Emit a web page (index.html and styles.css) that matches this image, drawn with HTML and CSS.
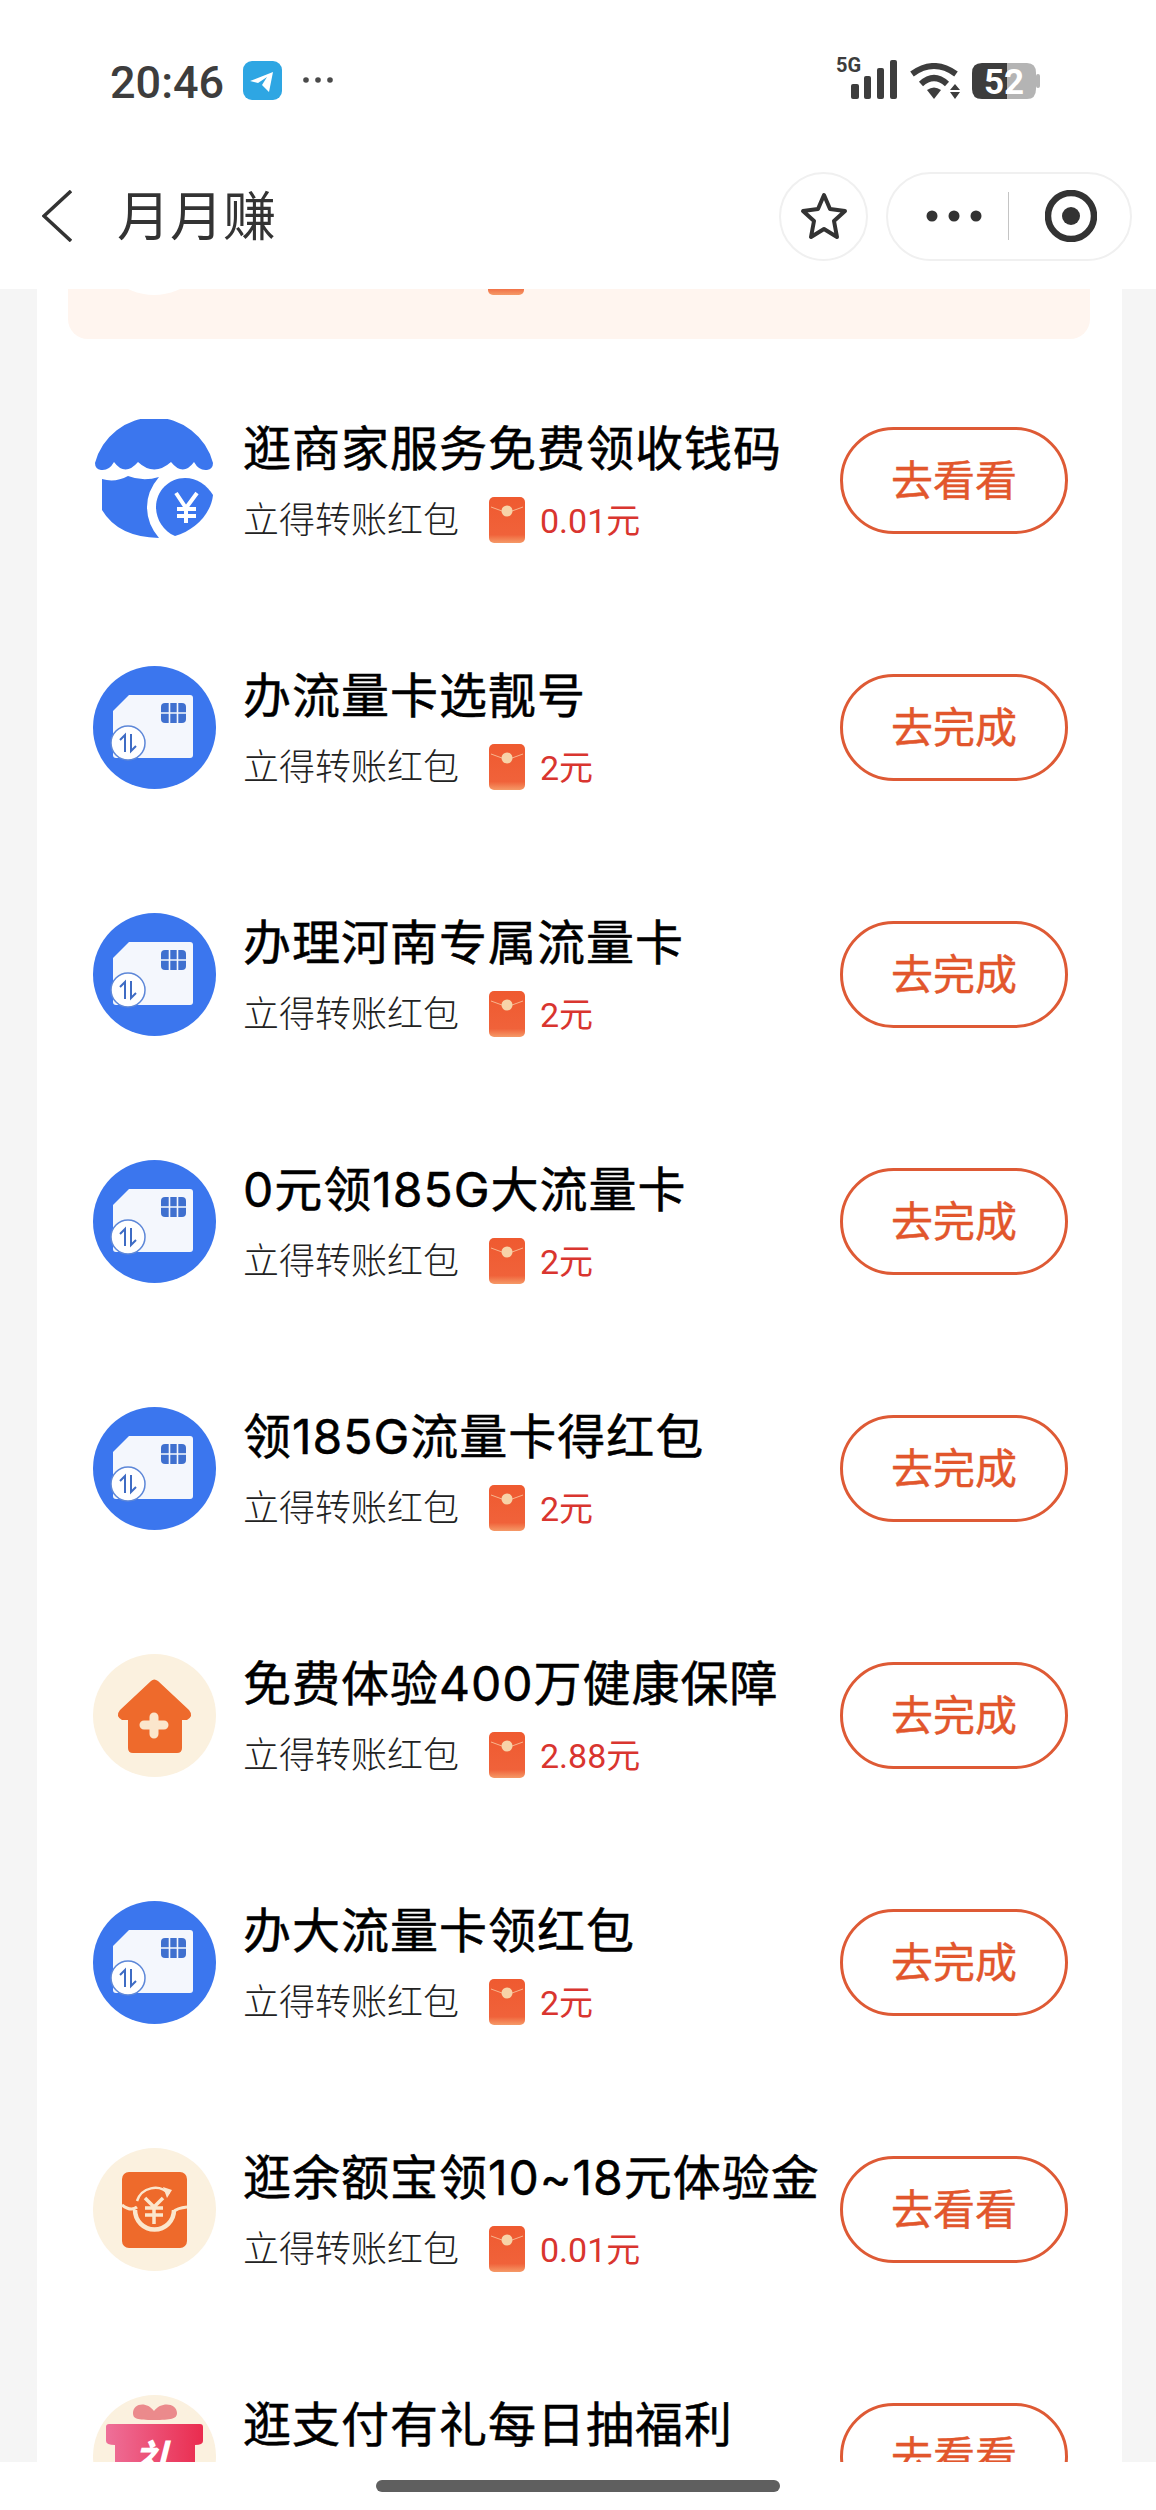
FILE: index.html
```html
<!DOCTYPE html>
<html lang="zh-CN">
<head>
  <meta charset="UTF-8" />
  <title>月月赚</title>
  <link rel="stylesheet" href="styles.css">
</head>
<body>
  <svg class="defs" width="0" height="0">
    <defs>
      <linearGradient id="envFill" x1="0" y1="0" x2="0" y2="1">
        <stop offset="0" stop-color="#ef5a30"/>
        <stop offset="0.82" stop-color="#f0623a"/>
        <stop offset="1" stop-color="#f59a68"/>
      </linearGradient>
      <linearGradient id="giftFill" x1="0" y1="0" x2="1" y2="0">
        <stop offset="0" stop-color="#ee7099"/>
        <stop offset="1" stop-color="#ea2c4e"/>
      </linearGradient>
      <symbol id="envelope" viewBox="0 0 36 46">
        <rect width="36" height="46" rx="5" fill="url(#envFill)"/>
        <path d="M2 10 L13 14 M23 14 L34 10" stroke="#f8b58e" stroke-width="1"/>
        <circle cx="18" cy="14" r="5.5" fill="#f7d3a8"/>
      </symbol>
      <symbol id="simcard" viewBox="0 0 123 123">
        <circle cx="61.5" cy="61.5" r="61.5" fill="#3b76ee"/>
        <path d="M36 29 H97 Q100 29 100 32 V89 Q100 92 97 92 H23 Q20 92 20 89 V45 Z" fill="#f4f7fd"/>
        <rect x="68" y="37" width="25" height="20" rx="4" fill="#3f70cf"/>
        <path d="M68 47 H93 M76.500 37 V57 M84.500 37 V57" stroke="#f4f7fd" stroke-width="1.600"/>
        <circle cx="35" cy="77" r="17" fill="#fff" stroke="#5d87d8" stroke-width="1.500"/>
        <path d="M27 74 L32 69 V86 M43 80 L38 85 V68" fill="none" stroke="#3f6cc4" stroke-width="2"/>
      </symbol>
      <symbol id="shop" viewBox="0 0 123 123">
        <path d="M2 44 A61 61 0 0 1 120 44 Q120 50 114 51 Q106 52 101 43 Q90 58 78 43 Q61 58 45 43 Q32 58 21 43 Q16 52 8 51 Q2 50 2 44 Z" fill="#3b76ee"/>
        <path d="M9 60 Q22 64 35 57 Q50 63 66 58 Q54 72 54 88 Q54 105 66 119 Q25 118 9 91 Z" fill="#3b76ee"/>
        <path d="M92 59 C104 59 114 66 120 76 C118 96 100 112 82 117 C70 112 63 100 63 88 C63 72 76 59 92 59 Z" fill="#3b76ee"/>
        <path d="M83 74 L93 89 L104 74 M93 89 V104 M84 90 H103 M84 97 H103" fill="none" stroke="#fff" stroke-width="4"/>
      </symbol>
      <symbol id="house" viewBox="0 0 123 123">
        <circle cx="61.500" cy="61.500" r="61.500" fill="#fbf1df"/>
        <path d="M58 27 Q61 24 65 27 L96 56 Q101 62 94 66 L89 66 V94 Q89 99 84 99 H40 Q35 99 35 94 V66 L29 66 Q22 62 27 56 Z" fill="#ee6a2c"/>
        <path d="M51 71 H71 M61 63 V80" stroke="#fbe6cc" stroke-width="9" stroke-linecap="round"/>
      </symbol>
      <symbol id="yuebao" viewBox="0 0 123 123">
        <circle cx="61.500" cy="61.500" r="61.500" fill="#fbf1df"/>
        <rect x="29" y="24" width="65" height="76" rx="7" fill="#ee6a2b"/>
        <path d="M29 57 Q38 64 44 59 M94 59 Q84 60 80 64" fill="none" stroke="#fbe6cc" stroke-width="3"/>
        <path d="M42 62 A19.500 19.500 0 0 0 81 62" fill="none" stroke="#fbe6cc" stroke-width="4.500"/>
        <path d="M44 53 A19 19 0 0 1 76 46" fill="none" stroke="#fbe6cc" stroke-width="2.500"/>
        <path d="M70 39 L79 42 L74 50 Z" fill="#fbe6cc"/>
        <path d="M52 50 L61 59 L70 50 M61 59 V76 M52 60 H70 M52 67 H70" fill="none" stroke="#fbe6cc" stroke-width="3.500"/>
      </symbol>
      <symbol id="gift" viewBox="0 0 123 123">
        <circle cx="61.500" cy="61.500" r="61.500" fill="#fbf1df"/>
        <path d="M61 16 C54 6 40 8 40 18 C40 24 44 25 61 25 C78 25 84 24 84 18 C84 8 68 6 61 16 Z" fill="#eb8a8c"/>
        <path d="M16 29 H107 Q110 29 110 32 V46 Q110 50 102 50 V123 H22 V50 Q13 50 13 46 V32 Q13 29 16 29 Z" fill="url(#giftFill)"/>
        <text class="gift-text" x="61" y="84">礼</text>
      </symbol>
    </defs>
  </svg>

  <div class="statusbar">
    <div class="status-left">
      <span class="clock">20:46</span>
      <svg class="tg" width="39" height="39" viewBox="0 0 39 39">
        <rect width="39" height="39" rx="9" fill="#2ea6e3"/>
        <path d="M7 20 L30 11 L26 31 L19 24 L24 16 L15 22 Z" fill="#fff"/>
      </svg>
      <svg class="more" width="32" height="8" viewBox="0 0 32 8">
        <circle cx="4" cy="4" r="2.800" fill="#4a4a4a"/>
        <circle cx="16" cy="4" r="2.800" fill="#4a4a4a"/>
        <circle cx="28" cy="4" r="2.800" fill="#4a4a4a"/>
      </svg>
    </div>
    <div class="status-right">
      <svg width="62" height="50" viewBox="0 -8 62 50">
        <text class="sig-text" x="0" y="15">5G</text>
        <rect x="15" y="27" width="8" height="15" rx="2" fill="#3d3d3d"/>
        <rect x="28" y="19" width="7" height="23" rx="2" fill="#3d3d3d"/>
        <rect x="41" y="11" width="7" height="31" rx="2" fill="#3d3d3d"/>
        <rect x="54" y="3" width="7" height="39" rx="2" fill="#3d3d3d"/>
      </svg>
      <svg width="50" height="36" viewBox="0 0 50 36">
        <path d="M2 11 Q24 -5 46 11" fill="none" stroke="#3d3d3d" stroke-width="6"/>
        <path d="M11 21 Q24 9 37 21" fill="none" stroke="#3d3d3d" stroke-width="6"/>
        <path d="M17 27 Q24 22 31 27 L24 36 Z" fill="#3d3d3d"/>
        <path d="M45 21 L50 27 H40 Z M40 29 H50 L45 36 Z" fill="#3d3d3d"/>
      </svg>
      <svg class="battery" width="68" height="46" viewBox="0 0 68 46">
        <path d="M35 0 H55 Q64 0 64 10 V26 Q64 36 55 36 H35 Z" fill="#b4b4b4"/>
        <rect x="64" y="11" width="4" height="14" rx="2" fill="#b4b4b4"/>
        <path d="M35 0 H10 Q0 0 0 10 V26 Q0 36 10 36 H35 Z" fill="#3d3d3d"/>
        <text class="bat-text" x="32" y="31">52</text>
      </svg>
    </div>
  </div>

  <div class="navbar">
    <svg class="back" width="30" height="52" viewBox="0 0 30 52">
      <path d="M29 1 L2 26 L29 51" fill="none" stroke="#333" stroke-width="3.500"/>
    </svg>
    <div class="nav-title">月月赚</div>
    <div class="nav-star">
      <svg width="50" height="50" viewBox="0 0 50 50">
        <path d="M25 4 L31 18 L46 20 L35 30 L38 46 L25 38 L12 46 L15 30 L4 20 L19 18 Z" fill="none" stroke="#333" stroke-width="4" stroke-linejoin="round"/>
      </svg>
    </div>
    <div class="capsule">
      <svg width="56" height="12" viewBox="0 0 56 12">
        <circle cx="6" cy="6" r="5.500" fill="#333"/>
        <circle cx="28" cy="6" r="5.500" fill="#333"/>
        <circle cx="50" cy="6" r="5.500" fill="#333"/>
      </svg>
      <span class="capsule-line"></span>
      <svg width="52" height="52" viewBox="0 0 52 52">
        <circle cx="26" cy="26" r="23" fill="none" stroke="#333" stroke-width="6.500"/>
        <circle cx="26" cy="26" r="9" fill="#333"/>
      </svg>
    </div>
  </div>

  <div class="scroller">
    <div class="card">
      <div class="banner">
        <span class="banner-dot"></span>
        <svg class="envelope banner-env"><use href="#envelope"/></svg>
      </div>

      <div class="task">
        <svg class="task-icon"><use href="#shop"/></svg>
        <div class="task-text">
          <div class="task-title">逛商家服务免费领收钱码</div>
          <div class="task-sub"><span class="sub-label">立得转账红包</span><svg class="envelope"><use href="#envelope"/></svg><span class="amount">0.01元</span></div>
        </div>
        <div class="task-btn">去看看</div>
      </div>

      <div class="task">
        <svg class="task-icon"><use href="#simcard"/></svg>
        <div class="task-text">
          <div class="task-title">办流量卡选靓号</div>
          <div class="task-sub"><span class="sub-label">立得转账红包</span><svg class="envelope"><use href="#envelope"/></svg><span class="amount">2元</span></div>
        </div>
        <div class="task-btn">去完成</div>
      </div>

      <div class="task">
        <svg class="task-icon"><use href="#simcard"/></svg>
        <div class="task-text">
          <div class="task-title">办理河南专属流量卡</div>
          <div class="task-sub"><span class="sub-label">立得转账红包</span><svg class="envelope"><use href="#envelope"/></svg><span class="amount">2元</span></div>
        </div>
        <div class="task-btn">去完成</div>
      </div>

      <div class="task">
        <svg class="task-icon"><use href="#simcard"/></svg>
        <div class="task-text">
          <div class="task-title">0元领185G大流量卡</div>
          <div class="task-sub"><span class="sub-label">立得转账红包</span><svg class="envelope"><use href="#envelope"/></svg><span class="amount">2元</span></div>
        </div>
        <div class="task-btn">去完成</div>
      </div>

      <div class="task">
        <svg class="task-icon"><use href="#simcard"/></svg>
        <div class="task-text">
          <div class="task-title">领185G流量卡得红包</div>
          <div class="task-sub"><span class="sub-label">立得转账红包</span><svg class="envelope"><use href="#envelope"/></svg><span class="amount">2元</span></div>
        </div>
        <div class="task-btn">去完成</div>
      </div>

      <div class="task">
        <svg class="task-icon"><use href="#house"/></svg>
        <div class="task-text">
          <div class="task-title">免费体验400万健康保障</div>
          <div class="task-sub"><span class="sub-label">立得转账红包</span><svg class="envelope"><use href="#envelope"/></svg><span class="amount">2.88元</span></div>
        </div>
        <div class="task-btn">去完成</div>
      </div>

      <div class="task">
        <svg class="task-icon"><use href="#simcard"/></svg>
        <div class="task-text">
          <div class="task-title">办大流量卡领红包</div>
          <div class="task-sub"><span class="sub-label">立得转账红包</span><svg class="envelope"><use href="#envelope"/></svg><span class="amount">2元</span></div>
        </div>
        <div class="task-btn">去完成</div>
      </div>

      <div class="task">
        <svg class="task-icon"><use href="#yuebao"/></svg>
        <div class="task-text">
          <div class="task-title">逛余额宝领10~18元体验金</div>
          <div class="task-sub"><span class="sub-label">立得转账红包</span><svg class="envelope"><use href="#envelope"/></svg><span class="amount">0.01元</span></div>
        </div>
        <div class="task-btn">去看看</div>
      </div>

      <div class="task">
        <svg class="task-icon"><use href="#gift"/></svg>
        <div class="task-text">
          <div class="task-title">逛支付有礼每日抽福利</div>
          <div class="task-sub"><span class="sub-label">立得转账红包</span><svg class="envelope"><use href="#envelope"/></svg><span class="amount">0.01元</span></div>
        </div>
        <div class="task-btn">去看看</div>
      </div>
    </div>
  </div>

  <div class="homebar"><span class="home-pill"></span></div>
</body>
</html>
```

FILE: styles.css
```css
html, body {
  height: 100%;
}
body {
  margin: 0;
  display: flex;
  flex-direction: column;
  overflow: hidden;
  background: white;
  font-family: Roboto, "Noto Sans CJK SC", sans-serif;
}
.defs {
  position: absolute;
}
.gift-text {
  font-family: "Noto Sans CJK SC", sans-serif;
  font-size: 46px;
  font-weight: 700;
  font-style: italic;
  fill: white;
  text-anchor: middle;
}
.sig-text {
  font-family: Roboto, sans-serif;
  font-size: 20px;
  font-weight: 700;
  fill: #3d3d3d;
}
.bat-text {
  font-family: Roboto, sans-serif;
  font-size: 35px;
  font-weight: 700;
  fill: white;
  text-anchor: middle;
}

/* status bar */
.statusbar {
  height: 160px;
  flex: none;
  display: flex;
  justify-content: space-between;
  align-items: center;
  padding: 0 116px 0 110px;
}
.status-left {
  display: flex;
  align-items: center;
}
.clock {
  font-size: 45px;
  font-weight: 500;
  color: #3d3d3d;
  width: 133px;
  margin-top: 4px;
}
.more {
  margin-left: 20px;
}
.status-right {
  display: flex;
  align-items: flex-end;
  gap: 12px;
  margin-bottom: 12px;
}
.battery {
  margin-bottom: -10px;
}

/* title bar */
.navbar {
  height: 112px;
  flex: none;
  padding: 0 24px 17px 42px;
  display: flex;
  align-items: center;
}
.back {
  flex: none;
}
.nav-title {
  flex: 1;
  margin-left: 45px;
  margin-bottom: 6px;
  font-size: 53px;
  color: #333;
}
.nav-star {
  width: 89px;
  height: 89px;
  box-sizing: border-box;
  border: 2px solid #f0f0f0;
  border-radius: 50%;
  display: flex;
  align-items: center;
  justify-content: center;
}
.capsule {
  width: 246px;
  height: 89px;
  box-sizing: border-box;
  margin-left: 18px;
  border: 2px solid #f0f0f0;
  border-radius: 45px;
  display: flex;
  align-items: center;
  padding-left: 38px;
}
.capsule-line {
  width: 1px;
  height: 48px;
  background: #c4c4c4;
  margin: 0 36px 0 26px;
}

/* task list */
.scroller {
  flex: 1;
  min-height: 0;
  overflow: hidden;
  background: #f5f5f5;
  padding: 0 34px 0 37px;
}
.card {
  background: white;
  margin-top: -100px;
}
.banner {
  height: 150px;
  margin: 0 32px 18px 31px;
  box-sizing: border-box;
  padding-bottom: 44px;
  background: #fff5ef;
  border-radius: 0 0 20px 20px;
  display: flex;
  align-items: flex-end;
}
.banner-dot {
  width: 118px;
  height: 118px;
  margin-left: 27px;
  border-radius: 50%;
  background: white;
}
.banner-env {
  margin-left: 275px;
}
.envelope {
  width: 36px;
  height: 46px;
  flex: none;
}
.task {
  height: 247px;
  display: flex;
  align-items: center;
  padding: 0 54px 0 56px;
}
.task-icon {
  width: 123px;
  height: 123px;
  flex: none;
}
.task-text {
  flex: 1;
  min-width: 0;
  margin-left: 27px;
}
.task-title {
  font-family: Inter, "Noto Sans CJK SC", sans-serif;
  font-size: 48px;
  line-height: 60px;
  letter-spacing: 1px;
  -webkit-text-stroke: 0.5px black;
  color: black;
  white-space: nowrap;
}
.task-sub {
  margin-top: 18px;
  height: 46px;
  display: flex;
  align-items: center;
}
.sub-label {
  font-size: 36px;
  font-weight: 300;
  color: #222;
  margin-right: 30px;
  margin-bottom: 6px;
}
.amount {
  font-size: 34px;
  color: #d9352f;
  margin-left: 15px;
  margin-bottom: 3px;
}
.task-btn {
  width: 228px;
  height: 107px;
  flex: none;
  box-sizing: border-box;
  border: 3px solid #de5a35;
  border-radius: 54px;
  padding-bottom: 6px;
  display: flex;
  align-items: center;
  justify-content: center;
  font-size: 42px;
  -webkit-text-stroke: 0.4px #e2562c;
  color: #e2562c;
}

/* gesture bar */
.homebar {
  height: 48px;
  flex: none;
  background: white;
  display: flex;
  align-items: center;
  justify-content: center;
}
.home-pill {
  width: 404px;
  height: 12px;
  border-radius: 6px;
  background: #5f5f5f;
}
```
